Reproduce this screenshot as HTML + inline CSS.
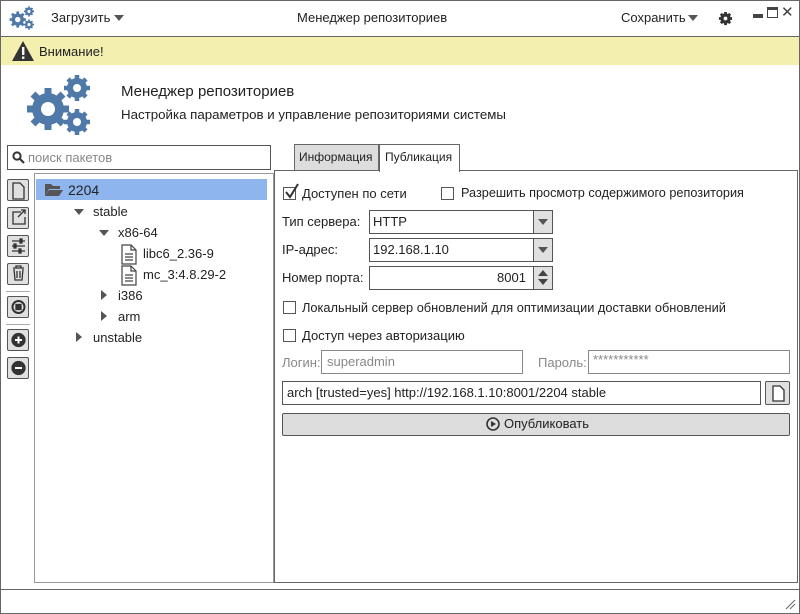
<!DOCTYPE html>
<html><head><meta charset="utf-8"><style>
*{box-sizing:border-box;margin:0;padding:0}
body{width:800px;height:614px;overflow:hidden;background:#fff;font-family:"Liberation Sans","DejaVu Sans",sans-serif;font-size:13px;color:#222;position:relative}
.a{position:absolute}
.box{position:absolute;border:1px solid #555;background:#fff}
.btn{position:absolute;width:22px;height:22px;border:1px solid #555;background:#e0e0e0;border-radius:2px}
.cb{position:absolute;width:13px;height:13px;border:1px solid #555;background:#fff}
.tri{width:0;height:0;position:absolute}
.dn{border-left:5px solid transparent;border-right:5px solid transparent;border-top:6px solid #555}
.rt{border-top:5px solid transparent;border-bottom:5px solid transparent;border-left:6px solid #555}
</style></head><body>
<div class="a" style="left:0;top:0;width:800px;height:614px;border:1px solid #666"></div>
<!-- title bar -->
<svg class="a" style="left:8px;top:6px" width="28" height="24" viewBox="0 0 66 62"><g fill="#4f79a8"><circle cx="22" cy="35" r="16"/><circle cx="51" cy="14" r="10"/><circle cx="51" cy="48" r="10"/></g><g stroke="#4f79a8" stroke-width="7"><path d="M22 14v42M1 35h42M7 20l30 30M37 20L7 50"/></g><g stroke="#4f79a8" stroke-width="4.5"><path d="M51 1v26M38 14h26M42 5l18 18M60 5L42 23M51 35v26M38 48h26M42 39l18 18M60 39L42 57"/></g><g fill="#fff"><circle cx="22" cy="35" r="7"/><circle cx="51" cy="14" r="4"/><circle cx="51" cy="48" r="4"/></g></svg>
<div class="a" style="left:51px;top:10px">Загрузить</div><div class="tri dn" style="left:114px;top:15px"></div>
<div class="a" style="left:297px;top:10px">Менеджер репозиториев</div>
<div class="a" style="left:621px;top:10px">Сохранить</div><div class="tri dn" style="left:688px;top:15px"></div>
<svg class="a" style="left:718px;top:11px" width="15" height="15" viewBox="0 0 16 16"><circle cx="8" cy="8" r="5.5" fill="#333"/><g stroke="#333" stroke-width="3"><path d="M8 1v14M1 8h14M3 3l10 10M13 3L3 13"/></g><circle cx="8" cy="8" r="2" fill="#fff"/></svg>
<div class="a" style="left:753px;top:14px;width:10px;height:4px;background:#444"></div>
<div class="a" style="left:767px;top:7px;width:11px;height:11px;border:1px solid #444;border-top-width:3px"></div>
<div class="a" style="left:781px;top:3px;font-size:15px;color:#444">✕</div>
<div class="a" style="left:1px;top:36px;width:798px;height:1px;background:#666"></div>
<div class="a" style="left:1px;top:37px;width:798px;height:28px;background:#f3efaf"></div>
<svg class="a" style="left:11px;top:40px" width="24" height="22" viewBox="0 0 24 22"><path d="M12 1L23 21H1z" fill="#333"/><rect x="11" y="7" width="2.4" height="8" fill="#fff"/><rect x="11" y="16.5" width="2.4" height="2.4" fill="#fff"/></svg>
<div class="a" style="left:39px;top:44px">Внимание!</div>
<!-- header -->
<svg class="a" style="left:26px;top:74px" width="66" height="62" viewBox="0 0 66 62"><g fill="#4f79a8"><circle cx="22" cy="35" r="16"/><circle cx="51" cy="14" r="10"/><circle cx="51" cy="48" r="10"/></g><g stroke="#4f79a8" stroke-width="7"><path d="M22 14v42M1 35h42M7 20l30 30M37 20L7 50"/></g><g stroke="#4f79a8" stroke-width="4.5"><path d="M51 1v26M38 14h26M42 5l18 18M60 5L42 23M51 35v26M38 48h26M42 39l18 18M60 39L42 57"/></g><g fill="#fff"><circle cx="22" cy="35" r="7"/><circle cx="51" cy="14" r="4"/><circle cx="51" cy="48" r="4"/></g></svg>
<div class="a" style="left:121px;top:83px;font-size:15px">Менеджер репозиториев</div>
<div class="a" style="left:121px;top:107px;font-size:13.3px">Настройка параметров и управление репозиториями системы</div>
<!-- search -->
<div class="box" style="left:7px;top:145px;width:264px;height:25px"></div>
<svg class="a" style="left:12px;top:151px" width="13" height="13" viewBox="0 0 13 13"><circle cx="5" cy="5" r="3.6" fill="none" stroke="#333" stroke-width="2"/><path d="M8 8l4 4" stroke="#333" stroke-width="2.2"/></svg>
<div class="a" style="left:28px;top:150px;color:#888">поиск пакетов</div>
<!-- toolbar -->
<div class="btn" style="left:7px;top:179px"></div>
<div class="btn" style="left:7px;top:207px"></div>
<div class="btn" style="left:7px;top:235px"></div>
<div class="btn" style="left:7px;top:263px"></div>
<div class="a" style="left:6px;top:291px;width:24px;height:1px;background:#aaa"></div>
<div class="btn" style="left:7px;top:296px"></div>
<div class="a" style="left:6px;top:324px;width:24px;height:1px;background:#aaa"></div>
<div class="btn" style="left:7px;top:329px"></div>
<div class="btn" style="left:7px;top:357px"></div>
<svg class="a" style="left:7px;top:179px" width="23" height="200" viewBox="0 0 23 200" fill="none" stroke="#333" stroke-width="1.3">
<path d="M6 4h7l4 4v12H6z"/>
<path d="M14 33H6v12h12v-7M11 38l7-7M14 31h4v4"/>
<path d="M5 62h13M5 67h13M5 72h13"/><g fill="#333"><rect x="13" y="60" width="2" height="4"/><rect x="7" y="65" width="2" height="4"/><rect x="12" y="70" width="2" height="4"/></g>
<path d="M6 89h11M9 89v-2h5v2M7 90l1 11h7l1-11M10 92v7M13 92v7"/>
<circle cx="11.5" cy="128" r="6" stroke-width="2"/><rect x="9" y="125.5" width="5" height="5" fill="#333"/>
<circle cx="11.5" cy="161" r="6.5" fill="#333"/><path d="M8 161h7M11.5 157.5v7" stroke="#fff" stroke-width="2"/>
<circle cx="11.5" cy="189" r="6.5" fill="#333"/><path d="M8 189h7" stroke="#fff" stroke-width="2"/>
</svg>
<!-- tree -->
<div class="a" style="left:34px;top:173px;width:240px;height:410px;border:1px solid #999;background:#fff"></div>
<div class="a" style="left:36px;top:179px;width:231px;height:21px;background:#8fb5ef"></div>
<svg class="a" style="left:44px;top:182px" width="20" height="15" viewBox="0 0 20 15"><path d="M1 2h6l2 2h7v3H5L1 14z" fill="#555"/><path d="M5 8h14l-4 6H1z" fill="#555"/></svg>
<div class="a" style="left:68px;top:182px;font-size:14px">2204</div>
<div class="tri dn" style="left:74px;top:209px"></div><div class="a" style="left:93px;top:204px">stable</div>
<div class="tri dn" style="left:99px;top:230px"></div><div class="a" style="left:118px;top:225px">x86-64</div>
<svg class="a" style="left:120px;top:244px" width="18" height="42" viewBox="0 0 18 42" fill="none" stroke="#444" stroke-width="1.2"><path d="M2 1h9l5 5v14H2zM11 1v5h5M5 10h8M5 13h8M5 16h8"/><path d="M2 22h9l5 5v14H2zM11 22v5h5M5 31h8M5 34h8M5 37h8"/></svg>
<div class="a" style="left:143px;top:246px">libc6_2.36-9</div>
<div class="a" style="left:143px;top:267px">mc_3:4.8.29-2</div>
<div class="tri rt" style="left:101px;top:290px"></div><div class="a" style="left:118px;top:288px">i386</div>
<div class="tri rt" style="left:101px;top:311px"></div><div class="a" style="left:118px;top:309px">arm</div>
<div class="tri rt" style="left:76px;top:332px"></div><div class="a" style="left:93px;top:330px">unstable</div>
<!-- tabs -->
<div class="a" style="left:294px;top:144px;width:85px;height:27px;border:1px solid #666;background:#ddd"></div>
<div class="a" style="left:299px;top:150px;font-size:12px">Информация</div>
<div class="a" style="left:379px;top:144px;width:81px;height:28px;border:1px solid #666;border-bottom:none;background:#fff;z-index:2"></div>
<div class="a" style="left:385px;top:150px;z-index:3;font-size:12px">Публикация</div>
<div class="a" style="left:274px;top:170px;width:524px;height:413px;border:1px solid #666;background:#fff"></div>
<!-- form -->
<div class="cb" style="left:283px;top:187px"></div>
<svg class="a" style="left:284px;top:183px" width="16" height="16" viewBox="0 0 16 16"><path d="M2 9l4 5 8-13" fill="none" stroke="#333" stroke-width="2"/></svg>
<div class="a" style="left:302px;top:186px">Доступен по сети</div>
<div class="cb" style="left:441px;top:187px"></div><div class="a" style="left:461px;top:186px;font-size:12.7px">Разрешить просмотр содержимого репозитория</div>
<div class="a" style="left:282px;top:214px">Тип сервера:</div>
<div class="box" style="left:369px;top:210px;width:184px;height:24px"></div><div class="a" style="left:533px;top:211px;width:19px;height:22px;background:#e0e0e0;border-left:1px solid #555"></div><div class="tri dn" style="left:538px;top:219px"></div>
<div class="a" style="left:373px;top:214px">HTTP</div>
<div class="a" style="left:282px;top:242px">IP-адрес:</div>
<div class="box" style="left:369px;top:238px;width:184px;height:24px"></div><div class="a" style="left:533px;top:239px;width:19px;height:22px;background:#e0e0e0;border-left:1px solid #555"></div><div class="tri dn" style="left:538px;top:247px"></div>
<div class="a" style="left:373px;top:242px">192.168.1.10</div>
<div class="a" style="left:282px;top:270px">Номер порта:</div>
<div class="box" style="left:369px;top:266px;width:184px;height:24px"></div><div class="a" style="left:533px;top:267px;width:19px;height:22px;background:#e0e0e0;border-left:1px solid #555"></div>
<div class="tri" style="left:538px;top:270px;border-left:5px solid transparent;border-right:5px solid transparent;border-bottom:6px solid #444"></div><div class="tri dn" style="left:538px;top:279px;border-top-color:#444"></div>
<div class="a" style="left:497px;top:270px">8001</div>
<div class="cb" style="left:283px;top:301px"></div><div class="a" style="left:302px;top:300px;font-size:12.8px">Локальный сервер обновлений для оптимизации доставки обновлений</div>
<div class="cb" style="left:283px;top:329px"></div><div class="a" style="left:302px;top:328px">Доступ через авторизацию</div>
<div class="a" style="left:282px;top:355px;color:#888">Логин:</div>
<div class="a" style="left:321px;top:350px;width:202px;height:24px;border:1px solid #888"></div><div class="a" style="left:327px;top:354px;color:#888">superadmin</div>
<div class="a" style="left:538px;top:355px;color:#888">Пароль:</div>
<div class="a" style="left:588px;top:350px;width:202px;height:24px;border:1px solid #888"></div><div class="a" style="left:593px;top:352px;color:#888">***********</div>
<div class="box" style="left:282px;top:381px;width:479px;height:24px"></div>
<div class="a" style="left:287px;top:385px">arch [trusted=yes] http://192.168.1.10:8001/2204 stable</div>
<div class="btn" style="left:765px;top:381px;width:25px;height:24px"></div>
<svg class="a" style="left:768px;top:383px" width="20" height="20" viewBox="0 0 20 20"><path d="M5 3h7l4 4v11H5z" fill="#fff" stroke="#333" stroke-width="1.3"/></svg>
<div class="a" style="left:282px;top:413px;width:508px;height:23px;border:1px solid #555;background:#ddd;border-radius:2px"></div>
<svg class="a" style="left:485px;top:416px" width="16" height="16" viewBox="0 0 16 16"><circle cx="8" cy="8" r="6" fill="none" stroke="#333" stroke-width="1.6"/><path d="M6 5v6l5-3z" fill="#333"/></svg>
<div class="a" style="left:504px;top:416px">Опубликовать</div>
<!-- status -->
<div class="a" style="left:1px;top:589px;width:798px;height:1px;background:#666"></div>
<svg class="a" style="left:784px;top:598px" width="12" height="12" viewBox="0 0 12 12"><path d="M2 11L11 2M6 11l5-5" stroke="#666" stroke-width="1"/></svg>
</body></html>
